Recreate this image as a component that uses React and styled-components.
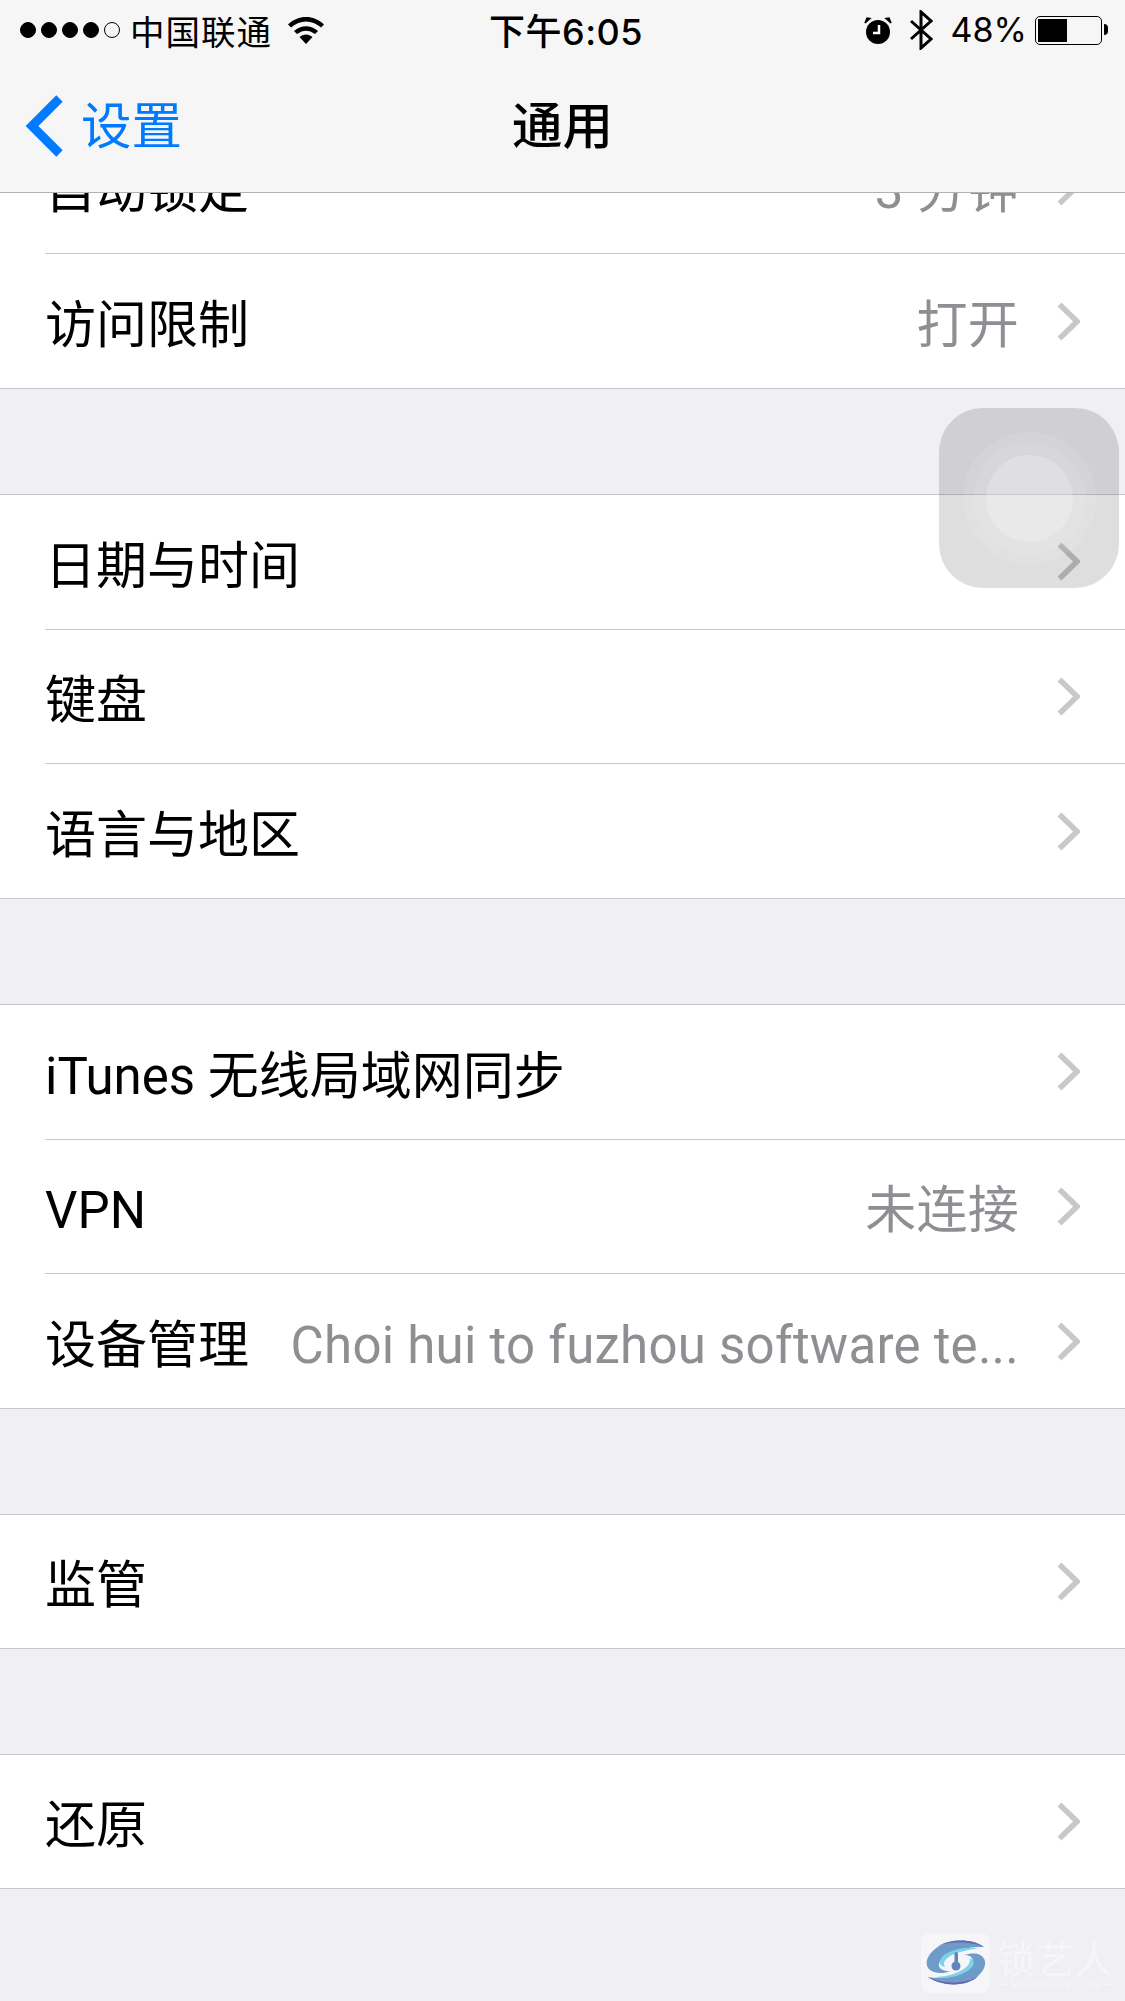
import React from "react";
import styled, { createGlobalStyle } from "styled-components";

const GlobalStyle = createGlobalStyle`
  html, body {
    margin: 0;
    padding: 0;
    height: 2001px;
    overflow: hidden;
    background: #efeff4;
  }
  body {
    font-family: "Roboto", "Noto Sans CJK SC", sans-serif;
    color: #000;
  }
`;

const Screen = styled.div`
  position: relative;
  width: 1125px;
  height: 2001px;
  overflow: hidden;
  background: #efeff4;
`;

const Header = styled.header`
  position: absolute;
  top: 0;
  left: 0;
  right: 0;
  z-index: 2;
  height: 192px;
  display: flex;
  flex-direction: column;
  background: #f6f6f7;
  border-bottom: 1px solid #b2b2b2;
`;

const StatusBar = styled.div`
  height: 60px;
  display: grid;
  grid-template-columns: 1fr auto 1fr;
  align-items: center;
  padding: 0 17px 0 20px;
`;

const StatusLeft = styled.div`
  display: flex;
  align-items: center;
`;

const StatusRight = styled.div`
  display: flex;
  align-items: center;
  justify-content: flex-end;
`;

const Signal = styled.div`
  display: flex;
  gap: 5px;
  margin-right: 10px;
`;

const Dot = styled.span`
  width: 16px;
  height: 16px;
  box-sizing: border-box;
  border-radius: 50%;
  border: 1.5px solid #000;
  background: ${(p) => (p.$on ? "#000" : "transparent")};
`;

const Carrier = styled.span`
  font-family: "Noto Sans CJK SC", sans-serif;
  font-size: 34.5px;
  line-height: 40px;
  letter-spacing: 1px;
  margin-right: 16px;
`;

const Clock = styled.span`
  margin: 3px 0 0 4px;
  font-size: 36px;
  line-height: 44px;
  font-weight: 500;
  letter-spacing: 0.5px;
  font-family: "Inter", "Noto Sans CJK SC", sans-serif;
`;

const Percent = styled.span`
  font-family: "Inter", sans-serif;
  font-size: 34px;
  line-height: 40px;
  margin: 0 8px 0 18px;
`;

const Battery = styled.div`
  position: relative;
  width: 67px;
  height: 29px;
  box-sizing: border-box;
  border: 1.5px solid #000;
  border-radius: 5px;
  padding: 2px;
  margin-right: 6px;

  &::before {
    content: "";
    display: block;
    height: 100%;
    width: ${(p) => p.$level}%;
    background: #000;
  }

  &::after {
    content: "";
    position: absolute;
    top: 7px;
    right: -7px;
    width: 4px;
    height: 11px;
    background: #000;
    border-radius: 0 6px 6px 0;
  }
`;

const NavBar = styled.nav`
  flex: 1;
  display: grid;
  grid-template-columns: 1fr auto 1fr;
  align-items: center;
  padding: 0 25px;
`;

const BackLink = styled.a`
  display: flex;
  align-items: center;
  gap: 18px;
  color: #007aff;
  font-size: 50.5px;
  font-family: "Noto Sans CJK SC", sans-serif;

  span {
    padding-bottom: 9px;
  }
`;

const Title = styled.h1`
  margin: 0;
  padding-bottom: 9px;
  font-size: 50.5px;
  font-weight: 500;
  font-family: "Noto Sans CJK SC", sans-serif;
`;

const Content = styled.main`
  margin-top: 118.67px;
`;

const Section = styled.section`
  background: #fff;
  border-top: 1px solid #c8c7cc;
  border-bottom: 1px solid #c8c7cc;
  margin-bottom: 105px;
`;

const Row = styled.div`
  height: 133.67px;
  box-sizing: border-box;
  margin-left: 45px;
  padding-right: 45px;
  display: flex;
  align-items: center;
  justify-content: space-between;
  gap: 44px;

  &:only-child {
    height: 133px;
  }

  & + & {
    border-top: 1px solid #c8c7cc;
    height: 134.67px;
  }
`;

const Label = styled.span`
  flex: none;
  padding-top: 10px;
  font-size: 51px;
  line-height: 60px;
`;

const Trailing = styled.div`
  flex: 1;
  min-width: 0;
  display: flex;
  align-items: center;
  justify-content: flex-end;
  gap: 38px;
`;

const Value = styled.span`
  padding-top: 10px;
  font-size: 51px;
  line-height: 60px;
  letter-spacing: 0.25px;
  color: #8e8e93;
  white-space: nowrap;
`;

const TouchButton = styled.div`
  position: absolute;
  z-index: 1;
  left: 939px;
  top: 408px;
  width: 180px;
  height: 180px;
  border-radius: 44px;
  background: rgba(0, 0, 0, 0.13);
  display: flex;
  align-items: center;
  justify-content: center;
`;

const TouchRing = styled.div`
  width: ${(p) => p.$size}px;
  height: ${(p) => p.$size}px;
  border-radius: 50%;
  background: rgba(255, 255, 255, ${(p) => p.$alpha});
  display: flex;
  align-items: center;
  justify-content: center;
`;

const Watermark = styled.div`
  position: absolute;
  left: 921px;
  top: 1933px;
  display: flex;
  gap: 7px;
`;

const LogoTile = styled.div`
  width: 69px;
  height: 60px;
  border-radius: 9px;
  background: rgba(255, 255, 255, 0.45);
  display: flex;
  align-items: center;
  justify-content: center;
`;

const Brand = styled.div`
  padding-top: 3px;
  color: rgba(255, 255, 255, 0.45);
  font-family: "Noto Sans CJK SC", sans-serif;
  font-size: 38px;
  line-height: 42px;
  letter-spacing: 1px;
`;

const BrandSite = styled.small`
  display: flex;
  align-items: center;
  gap: 3px;
  font-family: "Liberation Sans", sans-serif;
  font-size: 10.5px;
  line-height: 12px;
  letter-spacing: 0.8px;
  color: rgba(255, 255, 255, 0.45);

  &::before,
  &::after {
    content: "";
    flex: 1;
    height: 1px;
    background: rgba(255, 255, 255, 0.45);
  }
`;

const ChevronRight = () => (
  <svg width="23" height="39" viewBox="0 0 23 39" style={{ flex: "none" }}>
    <path d="M2.5 2.5 L20 19.5 L2.5 36.5" fill="none" stroke="#c7c7cc" strokeWidth="5.5" />
  </svg>
);

const ChevronLeft = () => (
  <svg width="38" height="62" viewBox="0 0 38 62">
    <path d="M34.5 3.5 L7 31 L34.5 58.5" fill="none" stroke="#007aff" strokeWidth="9" />
  </svg>
);

const WifiIcon = () => (
  <svg width="36" height="27" viewBox="0 0 36 27">
    <path d="M0 7.5 C10 -2.5 26 -2.5 36 7.5 L33 10.5 C24 2.5 12 2.5 3 10.5Z" />
    <path d="M6 14 C13 7.5 23 7.5 30 14 L27 17 C21 12.5 15 12.5 9 17Z" />
    <path d="M11.5 20 C15.5 16.5 20.5 16.5 24.5 20 L18 27Z" />
  </svg>
);

const AlarmIcon = () => (
  <svg width="28" height="27" viewBox="0 0 28 27">
    <circle cx="14" cy="15" r="12" />
    <path d="M1 6 L6 1.5 L3 1 Z M27 6 L22 1.5 L25 1 Z" stroke="#000" strokeWidth="1.5" />
    <path d="M15 8 V16 H9" fill="none" stroke="#fff" strokeWidth="2.5" />
  </svg>
);

const BluetoothIcon = () => (
  <svg width="23" height="40" viewBox="0 0 23 40" style={{ marginLeft: 18 }}>
    <path
      d="M1 11 L21 29 L11 38 V2 L21 11 L1 29"
      fill="none"
      stroke="#000"
      strokeWidth="3"
    />
  </svg>
);

// swirl mark of the watermark with the little gauge in the middle
const LogoMark = () => (
  <svg width="60" height="46" viewBox="0 0 60 46">
    <path
      d="M58 7 C46 -2 22 -2 9 9 C-2 18 -2 29 8 32 C14 34 20 33 24 31 C14 31 10 26 15 20 C22 12 42 6 58 7Z"
      fill="#6d9cc8"
    />
    <path
      d="M52 9 C42 6 26 9 17 16 C12 21 13 26 19 27 C16 22 20 18 28 14 C36 11 44 9 52 9Z"
      fill="#7fd0e8"
    />
    <path
      d="M2 37 C16 47 42 47 52 36 C62 27 61 17 52 14 C47 13 42 14 38 15 C47 15 49 21 45 26 C36 36 18 40 2 37Z"
      fill="#6d9cc8"
    />
    <path
      d="M8 37 C20 40 36 36 44 29 C49 25 49 20 44 18 C45 24 40 29 30 33 C22 36 15 37 8 37Z"
      fill="#7fd0e8"
    />
    <path d="M2 37 C16 47 42 47 52 36 C42 44 18 45 2 37Z" fill="#6a63ad" />
    <path d="M58 7 C46 -2 24 -1 12 6 C24 1 44 1 58 7Z" fill="#6a63ad" />
    <rect x="28.5" y="12" width="3.5" height="14" rx="1.7" fill="#5f86bd" />
    <circle cx="30" cy="26" r="4.5" fill="#5f86bd" />
  </svg>
);

const sections = [
  [
    { label: "自动锁定", value: "3 分钟" },
    { label: "访问限制", value: "打开" },
  ],
  [{ label: "日期与时间" }, { label: "键盘" }, { label: "语言与地区" }],
  [
    { label: "iTunes 无线局域网同步" },
    { label: "VPN", value: "未连接" },
    { label: "设备管理", value: "Choi hui to fuzhou software te..." },
  ],
  [{ label: "监管" }],
  [{ label: "还原" }],
];

export default function App() {
  return (
    <Screen>
      <GlobalStyle />
      <Header>
        <StatusBar>
          <StatusLeft>
            <Signal>
              {[1, 2, 3, 4, 5].map((n) => (
                <Dot key={n} $on={n < 5} />
              ))}
            </Signal>
            <Carrier>中国联通</Carrier>
            <WifiIcon />
          </StatusLeft>
          <Clock>下午6:05</Clock>
          <StatusRight>
            <AlarmIcon />
            <BluetoothIcon />
            <Percent>48%</Percent>
            <Battery $level={48} />
          </StatusRight>
        </StatusBar>
        <NavBar>
          <BackLink>
            <ChevronLeft />
            <span>设置</span>
          </BackLink>
          <Title>通用</Title>
        </NavBar>
      </Header>

      <Content>
        {sections.map((rows, i) => (
          <Section key={i}>
            {rows.map((row) => (
              <Row key={row.label}>
                <Label>{row.label}</Label>
                <Trailing>
                  {row.value && <Value>{row.value}</Value>}
                  <ChevronRight />
                </Trailing>
              </Row>
            ))}
          </Section>
        ))}
      </Content>

      <TouchButton>
        <TouchRing $size={133} $alpha={0.09}>
          <TouchRing $size={113} $alpha={0.07}>
            <TouchRing $size={87} $alpha={0.22} />
          </TouchRing>
        </TouchRing>
      </TouchButton>

      <Watermark>
        <LogoTile>
          <LogoMark />
        </LogoTile>
        <Brand>
          锁艺人
          <BrandSite>SUOYIREN.COM</BrandSite>
        </Brand>
      </Watermark>
    </Screen>
  );
}
